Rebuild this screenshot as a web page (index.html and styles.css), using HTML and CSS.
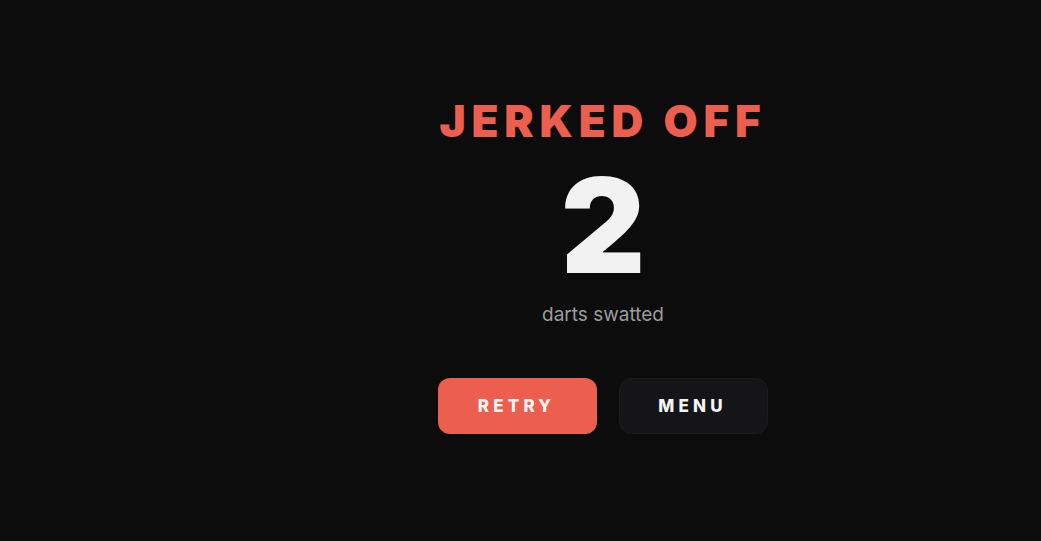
FILE: index.html
```html
<!DOCTYPE html>
<html>
<head>
<meta charset="utf-8">
<link rel="stylesheet" href="styles.css">
</head>
<body>
<main class="screen">
  <h1 class="title">JERKED OFF</h1>
  <div class="score">2</div>
  <p class="label">darts swatted</p>
  <div class="actions">
    <button class="btn btn-retry">RETRY</button>
    <button class="btn btn-menu">MENU</button>
  </div>
</main>
</body>
</html>
```
FILE: styles.css
```css
html, body {
  margin: 0;
  padding: 0;
  background: #0c0c0c;
  height: 100%;
}
.screen {
  box-sizing: border-box;
  height: 541px;
  padding: 99px 0 0 165px;
  display: flex;
  flex-direction: column;
  align-items: center;
  font-family: Inter, "Noto Sans", sans-serif;
}
.title {
  margin: 0;
  font-size: 44px;
  line-height: 1;
  font-weight: 900;
  letter-spacing: 5.8px;
  color: #ec5f4e;
}
.score {
  margin-top: 31px;
  font-size: 131px;
  line-height: 0.8;
  font-weight: 900;
  color: #f2f2f2;
}
.label {
  margin: 26px 0 0;
  font-size: 19px;
  line-height: 1;
  color: #9b9b9f;
}
.actions {
  margin-top: 54px;
  display: flex;
  gap: 22px;
}
.btn {
  height: 56px;
  border-radius: 12px;
  border: none;
  font-family: Inter, "Noto Sans", sans-serif;
  font-weight: 800;
  font-size: 17px;
  letter-spacing: 4.2px;
  padding-left: 4px;
  color: #f4f4f4;
  cursor: pointer;
}
.btn-retry {
  width: 159px;
  background: #ec5f4e;
}
.btn-menu {
  width: 149px;
  background: #151517;
  border: 1px solid #1b1b1e;
}
```
